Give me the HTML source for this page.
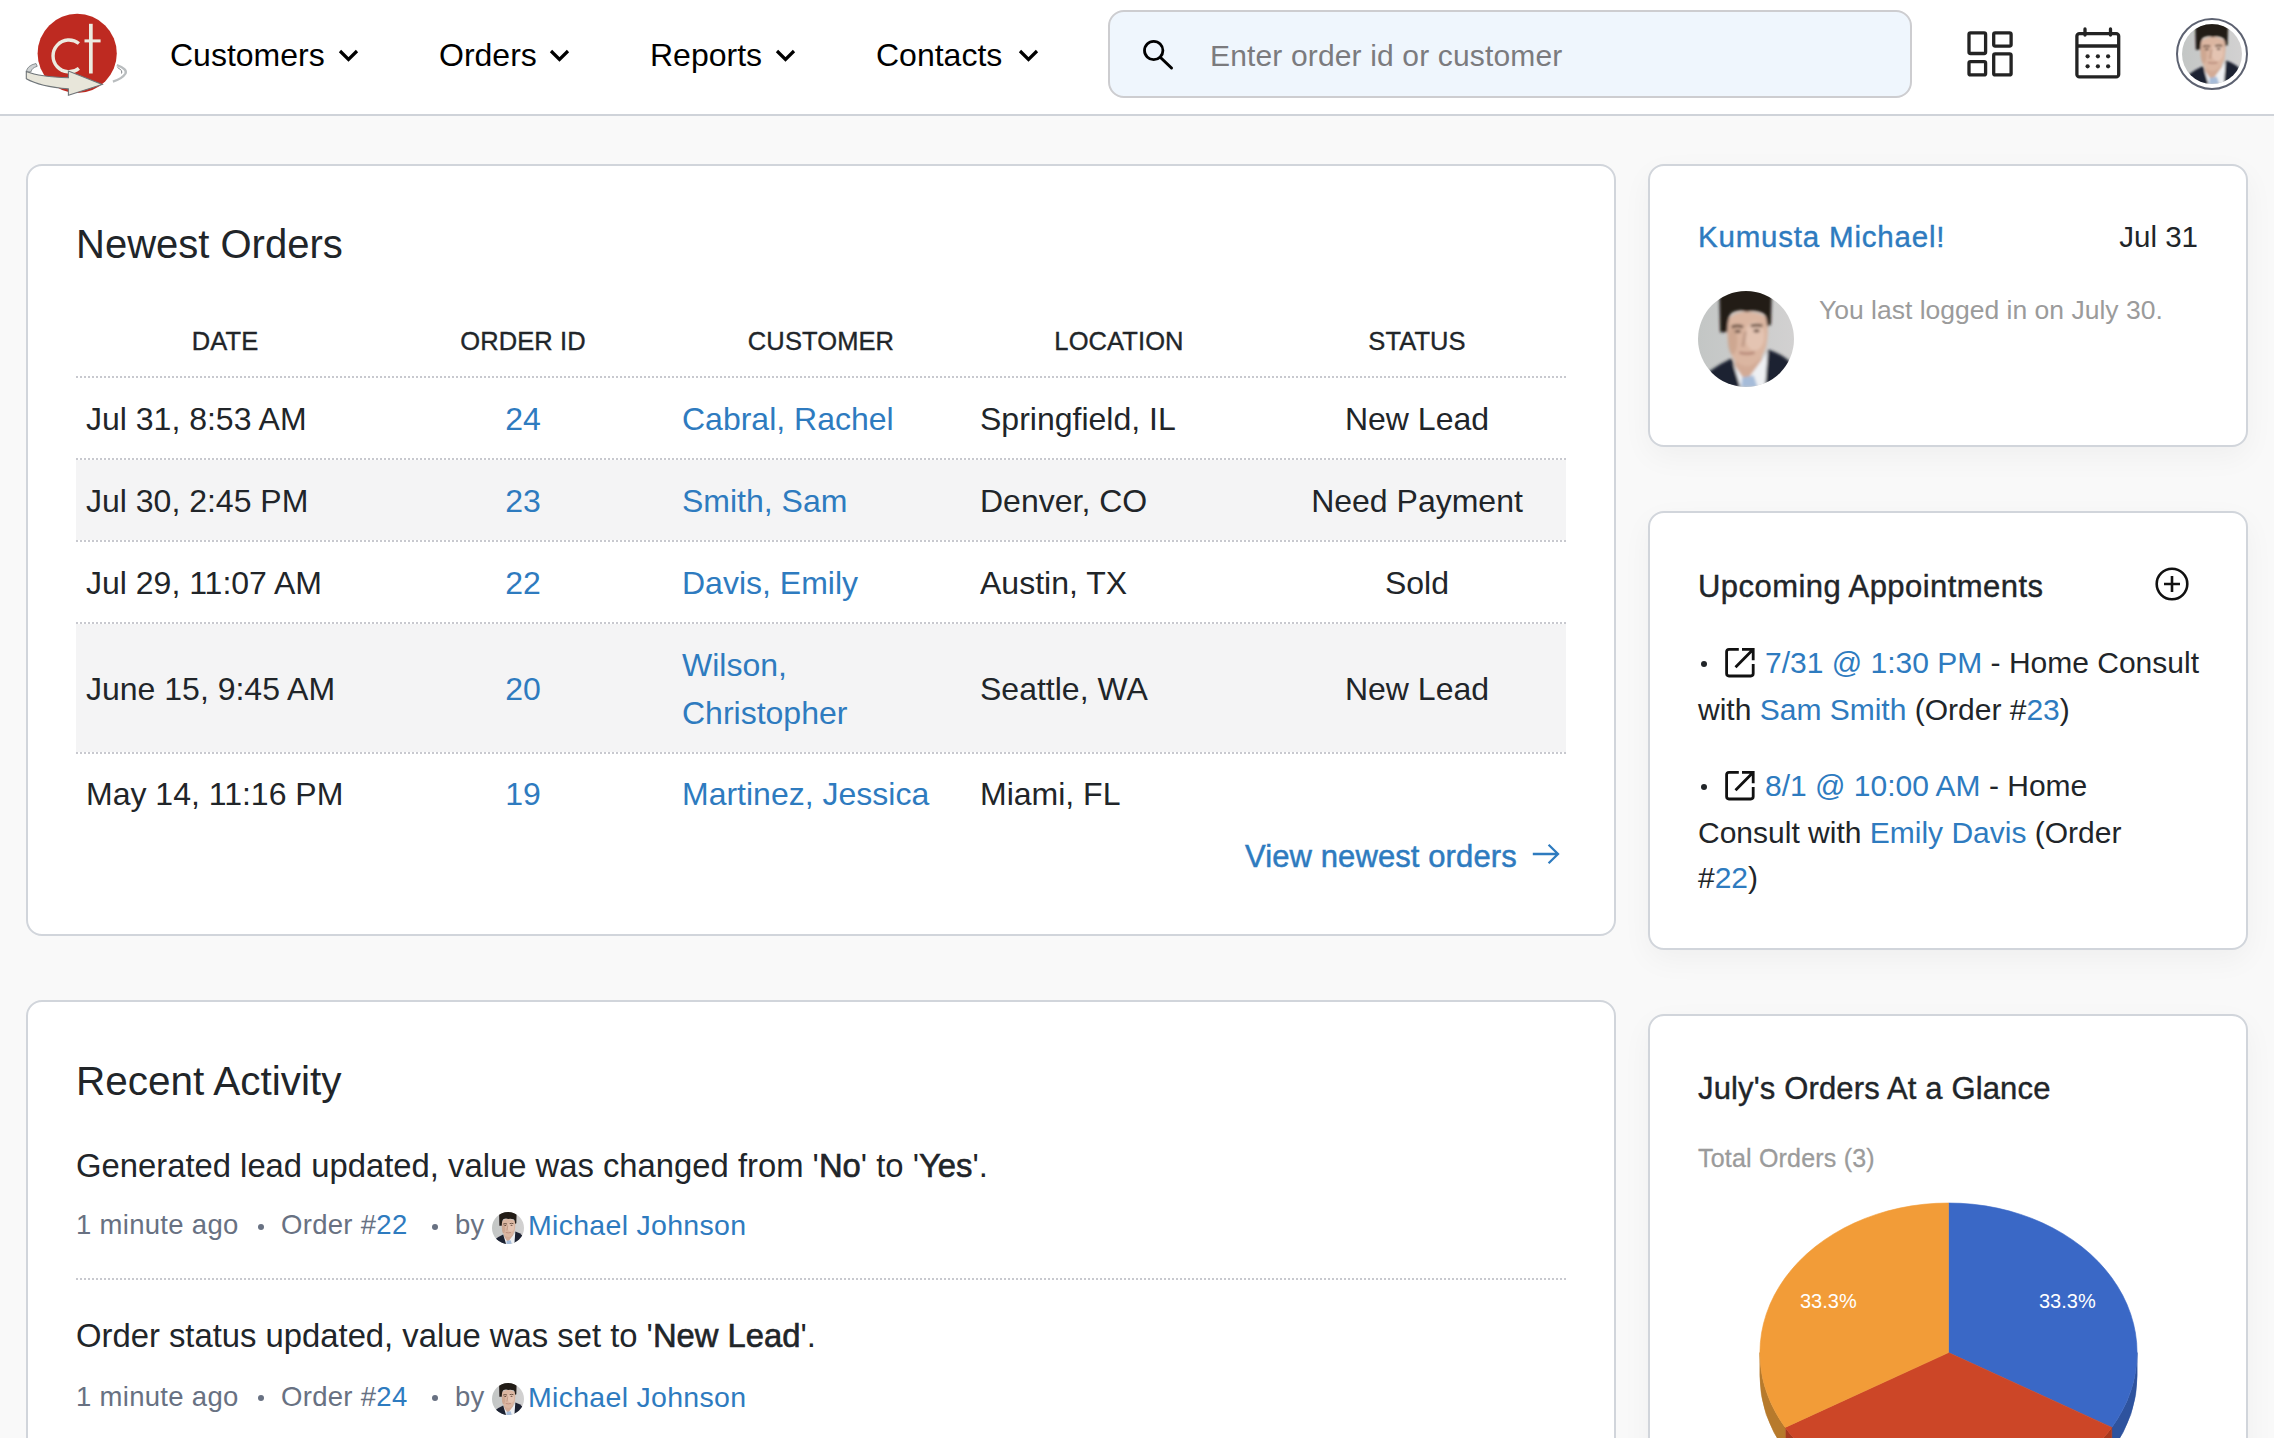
<!DOCTYPE html>
<html>
<head>
<meta charset="utf-8">
<style>
*{box-sizing:border-box;margin:0;padding:0}
html,body{width:2274px;height:1438px;overflow:hidden}
body{background:#f9f9f9;font-family:"Liberation Sans",sans-serif;color:#212529;position:relative}
.abs{position:absolute;white-space:nowrap;line-height:1}
a{color:#2e7bbf;text-decoration:none}
#hdr{position:absolute;left:0;top:0;width:2274px;height:116px;background:#fff;border-bottom:2px solid #cfd3d9}
.nav{position:absolute;margin-top:1px;font-size:32px;color:#000;line-height:1}
.chev{position:absolute}
#search{position:absolute;left:1108px;top:10px;width:804px;height:88px;background:#eff6fd;border:2px solid #cdcdd0;border-radius:16px}
.card{position:absolute;background:#fff;border:2px solid #d1d5db;border-radius:16px}
.rc{box-shadow:0 10px 30px rgba(0,0,0,.045)}
.dots{position:absolute;height:2px;background:repeating-linear-gradient(90deg,#c8c9cf 0 2px,transparent 2px 4px)}
.td{font-size:32px}
.sb{font-weight:normal;-webkit-text-stroke:0.6px #212529}
.meta{font-size:27.5px;color:#687182;letter-spacing:0.3px}
.mdot{position:absolute;width:6px;height:6px;border-radius:50%;background:#687182}
.meta a{color:#2e7bbf}
.dot{font-size:18px;position:relative;top:-4px;margin:0 8px 0 10px}
.mini{position:absolute;border-radius:50%}
.stripe{position:absolute;background:#f4f4f5}
</style>
</head>
<body>
<svg width="0" height="0" style="position:absolute">
  <defs>
    <symbol id="face" viewBox="0 0 100 100">
      <filter id="bl" x="-10%" y="-10%" width="120%" height="120%"><feGaussianBlur stdDeviation="1.4"/></filter>
      <linearGradient id="bgg" x1="0" x2="1" y1="0" y2="0"><stop offset="0" stop-color="#c3c6c5"/><stop offset="1" stop-color="#d2d1d1"/></linearGradient>
      <rect width="100" height="100" fill="url(#bgg)"/>
      <g filter="url(#bl)">
      <path d="M38 68 L66 64 L68 92 L40 94Z" fill="#d3ab96"/>
      <path d="M30 32 Q30 62 38 72 Q46 80 54 78 Q66 74 71 58 Q74 42 72 28 Q60 20 46 22 Q34 24 30 32Z" fill="#dbb6a1"/>
      <ellipse cx="59" cy="47" rx="10" ry="15" fill="#e8cbb9" opacity=".7"/>
      <ellipse cx="36" cy="52" rx="5" ry="14" fill="#bf957f" opacity=".45"/>
      <path d="M35 37.5 Q41 35 47 37.5 M55 36.5 Q61 34.5 67 36.5" stroke="#5e4536" stroke-width="2.8" fill="none"/>
      <ellipse cx="41.5" cy="42" rx="3.2" ry="1.6" fill="#5a4236"/>
      <ellipse cx="61" cy="41.5" rx="3.2" ry="1.6" fill="#5a4236"/>
      <path d="M49.5 42 L46.5 58" stroke="#a88270" stroke-width="3" opacity=".55"/>
      <path d="M43 64 Q51 66.5 59 64" stroke="#b07f70" stroke-width="2.2" fill="none"/>
      <path d="M23 43 L22 -2 L77 -2 L76 35 L72 37 Q72 25 67 23 Q58 19 51 22 Q43 18 35 23 Q31 27 30.5 43Z" fill="#231c18"/>
      <path d="M34 72 L48 92 L53 90 L73 63 L78 100 L37 100Z" fill="#eef0f3"/>
      <path d="M6 100 L11 84 Q22 76 35 70 L44 100Z" fill="#1c2030"/>
      <path d="M73 61 Q88 66 96 74 L100 100 L70 100Z" fill="#1c2030"/>
      <path d="M46 90 L58 88 L62 100 L45 100Z" fill="#a6bcd9"/>
      </g>
    </symbol>
  </defs>
</svg>

<!-- HEADER -->
<div id="hdr">
  <svg style="position:absolute;left:20px;top:8px" width="112" height="96" viewBox="20 8 112 96">
    <circle cx="77.2" cy="53.4" r="39.6" fill="#be2a21"/>
    <path d="M78.9 43.5 A15.9 15.9 0 1 0 78.9 68.3" fill="none" stroke="#ecebe0" stroke-width="3.4"/>
    <rect x="89" y="23.8" width="3.7" height="49.7" fill="#ecebe0"/>
    <rect x="84.5" y="39.4" width="16.1" height="3" fill="#ecebe0"/>
    <path d="M26.3 72 Q27 65.5 36 63.5 L37.2 66.3 Q31.5 68 31 71.8 Z" fill="#cfd2d3" stroke="#7e8487" stroke-width="0.9"/>
    <path d="M26.3 71.5 Q40 77 68.4 77.7 L68.4 71 L102.2 84.5 L68.4 95.2 L68.4 88.9 Q40 86.5 26.3 78.7 Z" fill="#e8e6da" stroke="#6f7579" stroke-width="1.1" stroke-linejoin="miter"/>
    <path d="M116.8 65.2 Q127.5 69 125.5 73.5 Q122.5 78.5 112.9 81.6" fill="none" stroke="#b9bdbf" stroke-width="2.4"/>
    <path d="M117.5 67.5 Q123 70.5 121.5 73.5" fill="none" stroke="#6f7579" stroke-width="0.9"/>
  </svg>

  <div class="nav" style="left:170px;top:38px">Customers</div>
  <svg class="chev" style="left:338px;top:49px" width="21" height="14" viewBox="0 0 21 14"><path d="M2 2 L10.5 10.5 L19 2" fill="none" stroke="#000" stroke-width="3.2"/></svg>
  <div class="nav" style="left:439px;top:38px">Orders</div>
  <svg class="chev" style="left:549px;top:49px" width="21" height="14" viewBox="0 0 21 14"><path d="M2 2 L10.5 10.5 L19 2" fill="none" stroke="#000" stroke-width="3.2"/></svg>
  <div class="nav" style="left:650px;top:38px">Reports</div>
  <svg class="chev" style="left:775px;top:49px" width="21" height="14" viewBox="0 0 21 14"><path d="M2 2 L10.5 10.5 L19 2" fill="none" stroke="#000" stroke-width="3.2"/></svg>
  <div class="nav" style="left:876px;top:38px">Contacts</div>
  <svg class="chev" style="left:1018px;top:49px" width="21" height="14" viewBox="0 0 21 14"><path d="M2 2 L10.5 10.5 L19 2" fill="none" stroke="#000" stroke-width="3.2"/></svg>

  <div id="search"></div>
  <svg style="position:absolute;left:1140px;top:37px" width="36" height="36" viewBox="1140 37 36 36">
    <circle cx="1153.7" cy="50.5" r="9.2" fill="none" stroke="#000" stroke-width="2.8"/>
    <path d="M1160.5 57.5 L1171.5 68" stroke="#000" stroke-width="3" stroke-linecap="round"/>
  </svg>
  <div class="abs" style="left:1210px;top:40.5px;font-size:30px;letter-spacing:0.15px;color:#7b7b7e">Enter order id or customer</div>

  <svg style="position:absolute;left:1960px;top:24px" width="60" height="60" viewBox="1960 24 60 60">
    <g fill="none" stroke="#232323" stroke-width="3.3">
      <rect x="1969" y="32.9" width="16.6" height="20.6" rx="1.5"/>
      <rect x="1993.7" y="32.9" width="17.4" height="13.2" rx="1.5"/>
      <rect x="1969" y="61.6" width="16.6" height="13.3" rx="1.5"/>
      <rect x="1993.7" y="53.9" width="17.4" height="21" rx="1.5"/>
    </g>
  </svg>
  <svg style="position:absolute;left:2068px;top:22px" width="60" height="64" viewBox="2068 22 60 64">
    <g fill="none" stroke="#232323" stroke-width="3.3">
      <rect x="2076.9" y="33.6" width="41.8" height="43.3" rx="2.5"/>
      <path d="M2077 46 H2118.5"/>
      <path d="M2085 29 V35 M2110.5 29 V35" stroke-linecap="round"/>
    </g>
    <g fill="#232323">
      <circle cx="2087.6" cy="56.3" r="2.1"/><circle cx="2097.9" cy="56.3" r="2.1"/><circle cx="2108.1" cy="56.3" r="2.1"/>
      <circle cx="2087.6" cy="66.3" r="2.1"/><circle cx="2097.9" cy="66.3" r="2.1"/><circle cx="2108.1" cy="66.3" r="2.1"/>
    </g>
  </svg>
  <div style="position:absolute;left:2176px;top:18px;width:72px;height:72px;border-radius:50%;border:2.5px solid #5d6271;background:#fff"></div>
  <svg style="position:absolute;left:2182px;top:24px;border-radius:50%" width="60" height="60"><use href="#face"/></svg>
</div>

<!-- NEWEST ORDERS CARD -->
<div class="card" style="left:26px;top:164px;width:1590px;height:772px"></div>
<div class="abs" style="left:76px;top:224px;font-size:40px">Newest Orders</div>

<div class="abs" style="left:76px;top:328.5px;width:298px;text-align:center;font-size:25.5px;letter-spacing:0.1px;-webkit-text-stroke:0.35px #212529">DATE</div>
<div class="abs" style="left:374px;top:328.5px;width:298px;text-align:center;font-size:25.5px;letter-spacing:0.1px;-webkit-text-stroke:0.35px #212529">ORDER ID</div>
<div class="abs" style="left:672px;top:328.5px;width:298px;text-align:center;font-size:25.5px;letter-spacing:0.1px;-webkit-text-stroke:0.35px #212529">CUSTOMER</div>
<div class="abs" style="left:970px;top:328.5px;width:298px;text-align:center;font-size:25.5px;letter-spacing:0.1px;-webkit-text-stroke:0.35px #212529">LOCATION</div>
<div class="abs" style="left:1268px;top:328.5px;width:298px;text-align:center;font-size:25.5px;letter-spacing:0.1px;-webkit-text-stroke:0.35px #212529">STATUS</div>

<div class="stripe" style="left:76px;top:460px;width:1490px;height:80px"></div>
<div class="stripe" style="left:76px;top:624px;width:1490px;height:128px"></div>
<div class="dots" style="left:76px;top:376px;width:1490px"></div>
<div class="dots" style="left:76px;top:458px;width:1490px"></div>
<div class="dots" style="left:76px;top:540px;width:1490px"></div>
<div class="dots" style="left:76px;top:622px;width:1490px"></div>
<div class="dots" style="left:76px;top:752px;width:1490px"></div>

<div class="abs td" style="left:86px;top:403px">Jul 31, 8:53 AM</div>
<a class="abs td" style="left:374px;top:403px;width:298px;text-align:center">24</a>
<a class="abs td" style="left:682px;top:403px">Cabral, Rachel</a>
<div class="abs td" style="left:980px;top:403px">Springfield, IL</div>
<div class="abs td" style="left:1268px;top:403px;width:298px;text-align:center">New Lead</div>
<div class="abs td" style="left:86px;top:485px">Jul 30, 2:45 PM</div>
<a class="abs td" style="left:374px;top:485px;width:298px;text-align:center">23</a>
<a class="abs td" style="left:682px;top:485px">Smith, Sam</a>
<div class="abs td" style="left:980px;top:485px">Denver, CO</div>
<div class="abs td" style="left:1268px;top:485px;width:298px;text-align:center">Need Payment</div>
<div class="abs td" style="left:86px;top:567px">Jul 29, 11:07 AM</div>
<a class="abs td" style="left:374px;top:567px;width:298px;text-align:center">22</a>
<a class="abs td" style="left:682px;top:567px">Davis, Emily</a>
<div class="abs td" style="left:980px;top:567px">Austin, TX</div>
<div class="abs td" style="left:1268px;top:567px;width:298px;text-align:center">Sold</div>
<div class="abs td" style="left:86px;top:673px">June 15, 9:45 AM</div>
<a class="abs td" style="left:374px;top:673px;width:298px;text-align:center">20</a>
<a class="abs td" style="left:682px;top:649px">Wilson,</a>
<a class="abs td" style="left:682px;top:697px">Christopher</a>
<div class="abs td" style="left:980px;top:673px">Seattle, WA</div>
<div class="abs td" style="left:1268px;top:673px;width:298px;text-align:center">New Lead</div>
<div class="abs td" style="left:86px;top:778px">May 14, 11:16 PM</div>
<a class="abs td" style="left:374px;top:778px;width:298px;text-align:center">19</a>
<a class="abs td" style="left:682px;top:778px">Martinez, Jessica</a>
<div class="abs td" style="left:980px;top:778px">Miami, FL</div>

<a class="abs" style="left:1245px;top:841px;font-size:31px;letter-spacing:0.1px;-webkit-text-stroke:0.5px #2e7bbf">View newest orders</a>
<svg style="position:absolute;left:1528px;top:840px" width="36" height="28" viewBox="1528 840 36 28"><path d="M1532.8 854 H1557.5 M1548.6 844.8 L1558 854 L1548.6 863.2" fill="none" stroke="#2e7bbf" stroke-width="2.3"/></svg>

<!-- RECENT ACTIVITY CARD -->
<div class="card" style="left:26px;top:1000px;width:1590px;height:600px"></div>
<div class="abs" style="left:76px;top:1061px;font-size:40.5px">Recent Activity</div>
<div class="abs" style="left:76px;top:1150px;font-size:32.8px">Generated lead updated, value was changed from '<b class="sb">No</b>' to '<b class="sb">Yes</b>'.</div>
<div class="abs meta" style="left:76px;top:1211.0px">1 minute ago</div>
<div class="mdot" style="left:258px;top:1223.8px"></div>
<div class="abs meta" style="left:281px;top:1211.0px">Order #<a>22</a></div>
<div class="mdot" style="left:431.5px;top:1223.8px"></div>
<div class="abs meta" style="left:455px;top:1211.0px">by</div>
<svg class="mini" style="left:492px;top:1212px" width="32" height="32"><use href="#face"/></svg>
<a class="abs meta" style="left:528px;top:1211.0px;color:#2e7bbf;font-size:28.5px">Michael Johnson</a>
<div class="dots" style="left:76px;top:1278px;width:1490px"></div>
<div class="abs" style="left:76px;top:1320px;font-size:32.8px">Order status updated, value was set to '<b class="sb">New Lead</b>'.</div>
<div class="abs meta" style="left:76px;top:1382.5px">1 minute ago</div>
<div class="mdot" style="left:258px;top:1395.3px"></div>
<div class="abs meta" style="left:281px;top:1382.5px">Order #<a>24</a></div>
<div class="mdot" style="left:431.5px;top:1395.3px"></div>
<div class="abs meta" style="left:455px;top:1382.5px">by</div>
<svg class="mini" style="left:492px;top:1383px" width="32" height="32"><use href="#face"/></svg>
<a class="abs meta" style="left:528px;top:1382.5px;color:#2e7bbf;font-size:28.5px">Michael Johnson</a>

<!-- WELCOME CARD -->
<div class="card rc" style="left:1648px;top:164px;width:600px;height:283px"></div>
<a class="abs" style="left:1698px;top:222px;font-size:29.5px;letter-spacing:0.8px;-webkit-text-stroke:0.4px #2e7bbf">Kumusta Michael!</a>
<div class="abs" style="left:1998px;top:222px;width:200px;text-align:right;font-size:29.5px">Jul 31</div>
<svg style="position:absolute;left:1698px;top:291px;border-radius:50%" width="96" height="96"><use href="#face"/></svg>
<div class="abs" style="left:1819px;top:297px;font-size:26.5px;color:#9b9b9b">You last logged in on July 30.</div>

<!-- APPOINTMENTS CARD -->
<div class="card rc" style="left:1648px;top:511px;width:600px;height:439px"></div>
<div class="abs" style="left:1698px;top:571px;font-size:31px;letter-spacing:0.45px;-webkit-text-stroke:0.4px #212529">Upcoming Appointments</div>
<svg style="position:absolute;left:2153px;top:566px" width="38" height="38" viewBox="0 0 38 38"><circle cx="19" cy="18" r="15.3" fill="none" stroke="#111" stroke-width="2.6"/><path d="M19 10 V26 M11 18 H27" stroke="#111" stroke-width="2.6"/></svg>
<div class="mdot" style="left:1701px;top:661px;width:6.4px;height:6.4px;background:#212529"></div>
<svg style="position:absolute;left:1724px;top:647px" width="32" height="32" viewBox="0 0 32 32"><path d="M14.8 2.4 H5 Q2.6 2.4 2.6 4.8 V26.6 Q2.6 29 5 29 H26.8 Q29.2 29 29.2 26.6 V16.9" fill="none" stroke="#111" stroke-width="2.8"/><path d="M18 2.4 H29.2 V13.3 M11.5 20.3 L29 2.6" fill="none" stroke="#111" stroke-width="2.8"/></svg>
<div class="abs" style="left:1765px;top:647.6px;font-size:30px"><a>7/31 @ 1:30 PM</a> - Home Consult</div>
<div class="abs" style="left:1698px;top:694.6px;font-size:30px">with <a>Sam Smith</a> (Order #<a>23</a>)</div>
<div class="mdot" style="left:1701px;top:784px;width:6.4px;height:6.4px;background:#212529"></div>
<svg style="position:absolute;left:1724px;top:770px" width="32" height="32" viewBox="0 0 32 32"><path d="M14.8 2.4 H5 Q2.6 2.4 2.6 4.8 V26.6 Q2.6 29 5 29 H26.8 Q29.2 29 29.2 26.6 V16.9" fill="none" stroke="#111" stroke-width="2.8"/><path d="M18 2.4 H29.2 V13.3 M11.5 20.3 L29 2.6" fill="none" stroke="#111" stroke-width="2.8"/></svg>
<div class="abs" style="left:1765px;top:770.6px;font-size:30px"><a>8/1 @ 10:00 AM</a> - Home</div>
<div class="abs" style="left:1698px;top:817.6px;font-size:30px">Consult with <a>Emily Davis</a> (Order</div>
<div class="abs" style="left:1698px;top:862.6px;font-size:30px">#<a>22</a>)</div>

<!-- CHART CARD -->
<div class="card rc" style="left:1648px;top:1014px;width:600px;height:600px"></div>
<div class="abs" style="left:1698px;top:1073px;font-size:31px;letter-spacing:0.15px;-webkit-text-stroke:0.4px #212529">July's Orders At a Glance</div>
<div class="abs" style="left:1698px;top:1146px;font-size:25px;letter-spacing:0.2px;-webkit-text-stroke:0.3px #9b9b9b;color:#9b9b9b">Total Orders (3)</div>
<svg style="position:absolute;left:0;top:0" width="2274" height="1438" viewBox="0 0 2274 1438">
<path d="M2137.1 1352.6 A188.6 149.6 0 0 1 2111.8 1427.4 L2111.8 1450.4 A188.6 149.6 0 0 0 2137.1 1375.6 Z" fill="#2e539e" stroke="#2e539e" stroke-width="0.6"/>
<path d="M2111.8 1427.4 A188.6 149.6 0 0 1 1785.2 1427.4 L1785.2 1450.4 A188.6 149.6 0 0 0 2111.8 1450.4 Z" fill="#a8391f" stroke="#a8391f" stroke-width="0.6"/>
<path d="M1785.2 1427.4 A188.6 149.6 0 0 1 1759.9 1352.6 L1759.9 1375.6 A188.6 149.6 0 0 0 1785.2 1450.4 Z" fill="#b77a2c" stroke="#b77a2c" stroke-width="0.6"/>
<path d="M1948.5 1352.6 L1948.5 1203.0 A188.6 149.6 0 0 1 2111.8 1427.4 Z" fill="#3a68c6" stroke="#3a68c6" stroke-width="0.6"/>
<path d="M1948.5 1352.6 L2111.8 1427.4 A188.6 149.6 0 0 1 1785.2 1427.4 Z" fill="#cc4627" stroke="#cc4627" stroke-width="0.6"/>
<path d="M1948.5 1352.6 L1785.2 1427.4 A188.6 149.6 0 0 1 1948.5 1203.0 Z" fill="#f29c38" stroke="#f29c38" stroke-width="0.6"/>
</svg>
<div class="abs" style="left:1800px;top:1291.1px;font-size:20px;color:#fff">33.3%</div>
<div class="abs" style="left:2039px;top:1291.1px;font-size:20px;color:#fff">33.3%</div>

</body>
</html>
